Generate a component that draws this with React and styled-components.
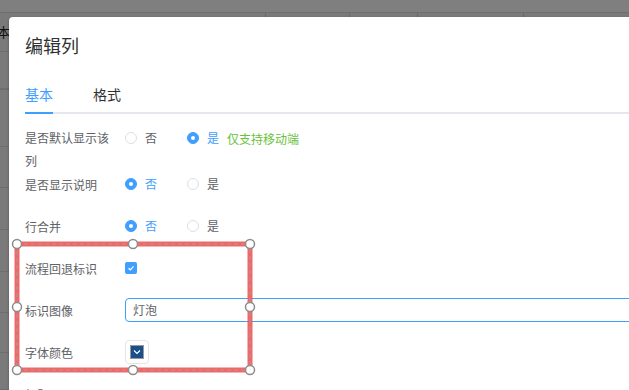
import React from 'react'
import styled, { createGlobalStyle } from 'styled-components'

const GlobalStyle = createGlobalStyle`
  html, body {
    margin: 0;
    padding: 0;
    background: #7a7a7a;
  }
  body {
    font-family: "Noto Sans CJK SC", "Noto Sans", "Liberation Sans", sans-serif;
  }
`

const Page = styled.div`
  position: relative;
  width: 629px;
  height: 390px;
  overflow: hidden;
  background: #f4f4f4;
`

const BehindTable = styled.div`
  display: flex;
  flex-direction: column;
`

const BehindRow = styled.div`
  position: relative;
  display: flex;
  align-items: center;
  height: ${props => props.h}px;
  background: ${props => (props.top ? '#ffffff' : '#f4f4f4')};
  border-bottom: ${props => (props.thick ? 2 : 1)}px solid #dcdcdc;
  box-sizing: border-box;
  font-size: 13px;
  color: #222;
`

const BehindCell = styled.div`
  margin-left: -3px;
  line-height: 20px;
`

const HeaderCols = styled.div`
  position: absolute;
  inset: 0;
  display: flex;
`

const HeaderCol = styled.div`
  width: ${props => props.w}px;
  flex-shrink: 0;
  border-right: 1px solid #d4d4d4;
  box-sizing: border-box;
`

const Mask = styled.div`
  position: absolute;
  inset: 0;
  background: rgba(0, 0, 0, 0.5);
`

const Dialog = styled.div`
  position: absolute;
  left: 9px;
  top: 17px;
  width: 700px;
  height: 440px;
  background: #fff;
  border-radius: 4px;
  box-shadow: 0 1px 3px rgba(0, 0, 0, 0.3);
`

const Header = styled.div`
  padding: 16px 16px 0;
`

const Title = styled.div`
  font-size: 18px;
  line-height: 24px;
  color: #303133;
`

const Body = styled.div`
  padding: 0 16px;
`

const Tabs = styled.div`
  position: relative;
  display: flex;
  height: 40px;
  margin-top: 17px;

  &::after {
    content: '';
    position: absolute;
    left: 0;
    right: 0;
    bottom: 0;
    height: 2px;
    background: #e4e7ed;
  }
`

const Tab = styled.div`
  position: relative;
  z-index: 1;
  padding: ${props => (props.first ? '0 20px 0 0' : '0 20px')};
  font-size: 14px;
  line-height: 40px;
  color: ${props => (props.active ? '#409eff' : '#303133')};

  &::after {
    content: '';
    display: ${props => (props.active ? 'block' : 'none')};
    position: absolute;
    left: 0;
    right: 20px;
    bottom: 0;
    height: 2px;
    background: #409eff;
  }
`

const Form = styled.div`
  margin-top: 12px;
`

const Row = styled.div`
  display: flex;
  align-items: ${props => (props.wrap ? 'flex-start' : 'center')};
  min-height: 24px;
  margin-bottom: ${props => (props.wrap ? 0 : 18)}px;
`

const Label = styled.div`
  width: 100px;
  flex-shrink: 0;
  padding-right: 12px;
  box-sizing: border-box;
  font-size: 12px;
  line-height: 23px;
  color: #606266;
`

const Content = styled.div`
  flex: 1;
  display: flex;
  align-items: center;
  min-height: 24px;
`

const RadioItem = styled.label`
  display: inline-flex;
  align-items: center;
  gap: 8px;
  margin-right: 30px;
  font-size: 12px;
  line-height: 24px;
  color: ${props => (props.checked ? '#409eff' : '#606266')};
`

const RadioDot = styled.span`
  position: relative;
  width: 12px;
  height: 12px;
  border-radius: 50%;
  box-sizing: border-box;
  border: 1px solid ${props => (props.checked ? '#409eff' : '#dcdfe6')};
  background: ${props => (props.checked ? '#409eff' : '#fff')};

  &::after {
    content: '';
    display: ${props => (props.checked ? 'block' : 'none')};
    position: absolute;
    left: 50%;
    top: 50%;
    width: 4px;
    height: 4px;
    margin: -2px 0 0 -2px;
    border-radius: 50%;
    background: #fff;
  }
`

const Hint = styled.span`
  margin-left: -22px;
  font-size: 12px;
  color: #67c23a;
`

const CheckBox = styled.span`
  display: inline-flex;
  align-items: center;
  justify-content: center;
  width: 12px;
  height: 12px;
  border-radius: 2px;
  background: #409eff;
`

const Input = styled.div`
  flex: 1;
  height: 24px;
  box-sizing: border-box;
  border: 1px solid #409eff;
  border-radius: 4px;
  padding: 0 7px;
  font-size: 12px;
  line-height: 22px;
  color: #606266;
`

const ColorPicker = styled.div`
  width: 24px;
  height: 24px;
  box-sizing: border-box;
  padding: 4px;
  border: 1px solid #e6e6e6;
  border-radius: 4px;
`

const Swatch = styled.div`
  display: flex;
  align-items: center;
  justify-content: center;
  width: 14px;
  height: 14px;
  background: ${props => props.color};
  border: 1px solid #999;
  box-sizing: border-box;
`

const Selection = styled.svg`
  position: absolute;
  left: 0;
  top: 0;
  pointer-events: none;
`

const Radio = ({ checked, children }) => (
  <RadioItem checked={checked}>
    <RadioDot checked={checked} />
    {children}
  </RadioItem>
)

const behindRows = [13, 39, 38, 57, 41, 42, 42, 41, 40, 37]

const handles = [
  [17, 244], [133, 244], [250, 244],
  [17, 307], [250, 307],
  [17, 370], [133, 370], [250, 370],
]

const App = () => (
  <>
    <GlobalStyle />
    <Page>
      <BehindTable>
        {behindRows.map((h, i) => (
          <BehindRow key={i} h={h} top={i === 0} thick={i === 2}>
            {i === 1 && (
              <>
                <HeaderCols>
                  <HeaderCol w={266} />
                  <HeaderCol w={84} />
                  <HeaderCol w={68} />
                  <HeaderCol w={106} />
                </HeaderCols>
                <BehindCell>本</BehindCell>
              </>
            )}
          </BehindRow>
        ))}
      </BehindTable>
      <Mask />
      <Dialog>
        <Header>
          <Title>编辑列</Title>
        </Header>
        <Body>
          <Tabs>
            <Tab first active>基本</Tab>
            <Tab>格式</Tab>
          </Tabs>
          <Form>
            <Row wrap>
              <Label>是否默认显示该列</Label>
              <Content>
                <Radio>否</Radio>
                <Radio checked>是</Radio>
                <Hint>仅支持移动端</Hint>
              </Content>
            </Row>
            <Row>
              <Label>是否显示说明</Label>
              <Content>
                <Radio checked>否</Radio>
                <Radio>是</Radio>
              </Content>
            </Row>
            <Row>
              <Label>行合并</Label>
              <Content>
                <Radio checked>否</Radio>
                <Radio>是</Radio>
              </Content>
            </Row>
            <Row>
              <Label>流程回退标识</Label>
              <Content>
                <CheckBox>
                  <svg width="8" height="8" viewBox="0 0 8 8">
                    <polyline points="1.5,4.2 3.3,5.8 6.5,2.3" fill="none" stroke="#fff" strokeWidth="1.2" />
                  </svg>
                </CheckBox>
              </Content>
            </Row>
            <Row>
              <Label>标识图像</Label>
              <Content>
                <Input>灯泡</Input>
              </Content>
            </Row>
            <Row>
              <Label>字体颜色</Label>
              <Content>
                <ColorPicker>
                  <Swatch color="#1b4f8c">
                    <svg width="8" height="6" viewBox="0 0 8 6">
                      <polyline points="1,1.5 4,4.5 7,1.5" fill="none" stroke="#fff" strokeWidth="1.2" />
                    </svg>
                  </Swatch>
                </ColorPicker>
              </Content>
            </Row>
            <Row>
              <Label>标题</Label>
            </Row>
          </Form>
        </Body>
      </Dialog>
      <Selection width="629" height="390" viewBox="0 0 629 390">
        <rect x="17" y="244" width="233" height="126" fill="none" stroke="#ee5656" strokeOpacity="0.9" strokeWidth="5" />
        <rect x="17" y="244" width="233" height="126" fill="none" stroke="#a0a0a0" strokeWidth="1" strokeDasharray="4 3" />
        {handles.map(([cx, cy], i) => (
          <circle key={i} cx={cx} cy={cy} r="4.5" fill="#fff" stroke="#8c8c8c" strokeWidth="1.5" />
        ))}
      </Selection>
    </Page>
  </>
)

export default App
